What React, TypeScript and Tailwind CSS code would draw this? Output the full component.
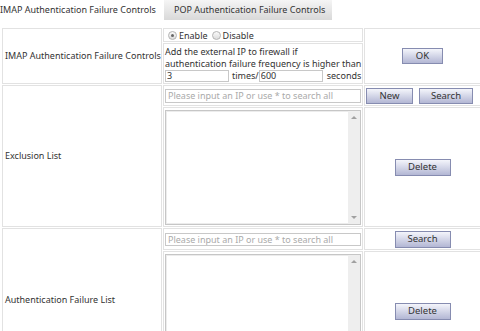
import React from "react"

const font = "font-['Noto_Sans',sans-serif]"

function Btn({ children, className = "" }: { children: React.ReactNode; className?: string }) {
  return (
    <button
      className={`border border-[#868cb0] bg-linear-to-b from-[#f4f5fb] to-[#b3b7d4] text-[9.5px] leading-none text-[#333] ${className}`}
    >
      {children}
    </button>
  )
}

function Radio({ checked }: { checked?: boolean }) {
  return (
    <span className="inline-flex h-[9px] w-[9px] items-center justify-center rounded-full border border-[#b4b4b4] bg-linear-to-b from-[#fafafa] to-[#dcdcdc]">
      {checked && <span className="h-[3px] w-[3px] rounded-full bg-[#666]" />}
    </span>
  )
}

function SearchBox({ className = "" }: { className?: string }) {
  return (
    <input
      type="text"
      placeholder="Please input an IP or use * to search all"
      className={`block w-[196px] border border-[#c8c8c8] px-[2px] text-[9px] leading-none text-[#333] placeholder:text-[#aaa] outline-none ${className}`}
    />
  )
}

function ListBox() {
  return (
    <div className="flex h-[115px] w-[196px] border border-[#c6c6c6] bg-white shadow-[inset_0_0_0_1px_#ececec]">
      <div className="flex-1" />
      <div className="flex w-[12px] flex-col items-center justify-between bg-[#eeeeee] py-[5px]">
        <span className="h-0 w-0 border-x-[3px] border-b-[3px] border-x-transparent border-b-[#a0a0a0]" />
        <span className="h-0 w-0 border-x-[3px] border-t-[3px] border-x-transparent border-t-[#a0a0a0]" />
      </div>
    </div>
  )
}

const cell = "border border-[#e2e2e2] p-0 align-middle whitespace-nowrap overflow-hidden"

export default function App() {
  return (
    <div className={`h-[331px] w-[480px] overflow-hidden bg-white text-[9px] leading-[12px] text-[#333] ${font}`}>
      <div className="flex h-[20px] items-stretch whitespace-nowrap">
        <div className="flex w-[164px] items-center bg-white pl-0">IMAP Authentication Failure Controls</div>
        <div className="flex w-[168px] items-center bg-linear-to-b from-[#f5f5f5] to-[#d9d9d9] pl-[10px]">
          POP Authentication Failure Controls
        </div>
      </div>

      <table className="ml-px mt-[7px] w-[481px] table-fixed border-separate border-spacing-px">
        <colgroup>
          <col className="w-[160px]" />
          <col className="w-[200px]" />
          <col className="w-[117px]" />
        </colgroup>
        <tbody>
          <tr className="h-[14px]">
            <td rowSpan={2} className={`${cell} pl-[2px]`}>
              IMAP Authentication Failure Controls
            </td>
            <td className={`${cell} h-[14px] pl-[4px]`}>
              <div className="flex items-center leading-none">
                <Radio checked />
                <span className="ml-[2px]">Enable</span>
                <span className="ml-[4px]" />
                <Radio />
                <span className="ml-[2px]">Disable</span>
              </div>
            </td>
            <td rowSpan={2} className={`${cell} text-center`}>
              <Btn className="h-[16px] w-[41px]">OK</Btn>
            </td>
          </tr>
          <tr className="h-[41px]">
            <td className={`${cell} h-[41px] pl-[1px]`}>
              <div>Add the external IP to firewall if</div>
              <div>authentication failure frequency is higher than</div>
              <div className="flex items-center">
                <input
                  type="text"
                  defaultValue="3"
                  className="h-[12px] w-[64px] border border-[#c8c8c8] px-[1px] text-[9px] leading-none outline-none"
                />
                <span className="ml-[3px]">times/</span>
                <input
                  type="text"
                  defaultValue="600"
                  className="h-[12px] w-[64px] border border-[#c8c8c8] px-[1px] text-[9px] leading-none outline-none"
                />
                <span className="ml-[4px]">seconds</span>
              </div>
            </td>
          </tr>

          <tr className="h-[21px]">
            <td rowSpan={2} className={`${cell} pl-[2px]`}>
              Exclusion List
            </td>
            <td className={`${cell} h-[21px] pl-[1px]`}>
              <SearchBox className="h-[14px]" />
            </td>
            <td className={`${cell} pl-[1px]`}>
              <div className="flex gap-[6px]">
                <Btn className="h-[16px] w-[47px]">New</Btn>
                <Btn className="h-[16px] w-[54px]">Search</Btn>
              </div>
            </td>
          </tr>
          <tr className="h-[120px]">
            <td className={`${cell} h-[120px] pl-[1px]`}>
              <ListBox />
            </td>
            <td className={`${cell} text-center`}>
              <Btn className="h-[17px] w-[56px]">Delete</Btn>
            </td>
          </tr>

          <tr className="h-[22px]">
            <td rowSpan={2} className={`${cell} pl-[2px]`}>
              Authentication Failure List
            </td>
            <td className={`${cell} h-[22px] pl-[1px]`}>
              <SearchBox className="h-[13px]" />
            </td>
            <td className={`${cell} text-center`}>
              <Btn className="h-[17px] w-[56px]">Search</Btn>
            </td>
          </tr>
          <tr className="h-[120px]">
            <td className={`${cell} h-[120px] pl-[1px]`}>
              <ListBox />
            </td>
            <td className={`${cell} text-center`}>
              <Btn className="h-[17px] w-[56px]">Delete</Btn>
            </td>
          </tr>
        </tbody>
      </table>
    </div>
  )
}
